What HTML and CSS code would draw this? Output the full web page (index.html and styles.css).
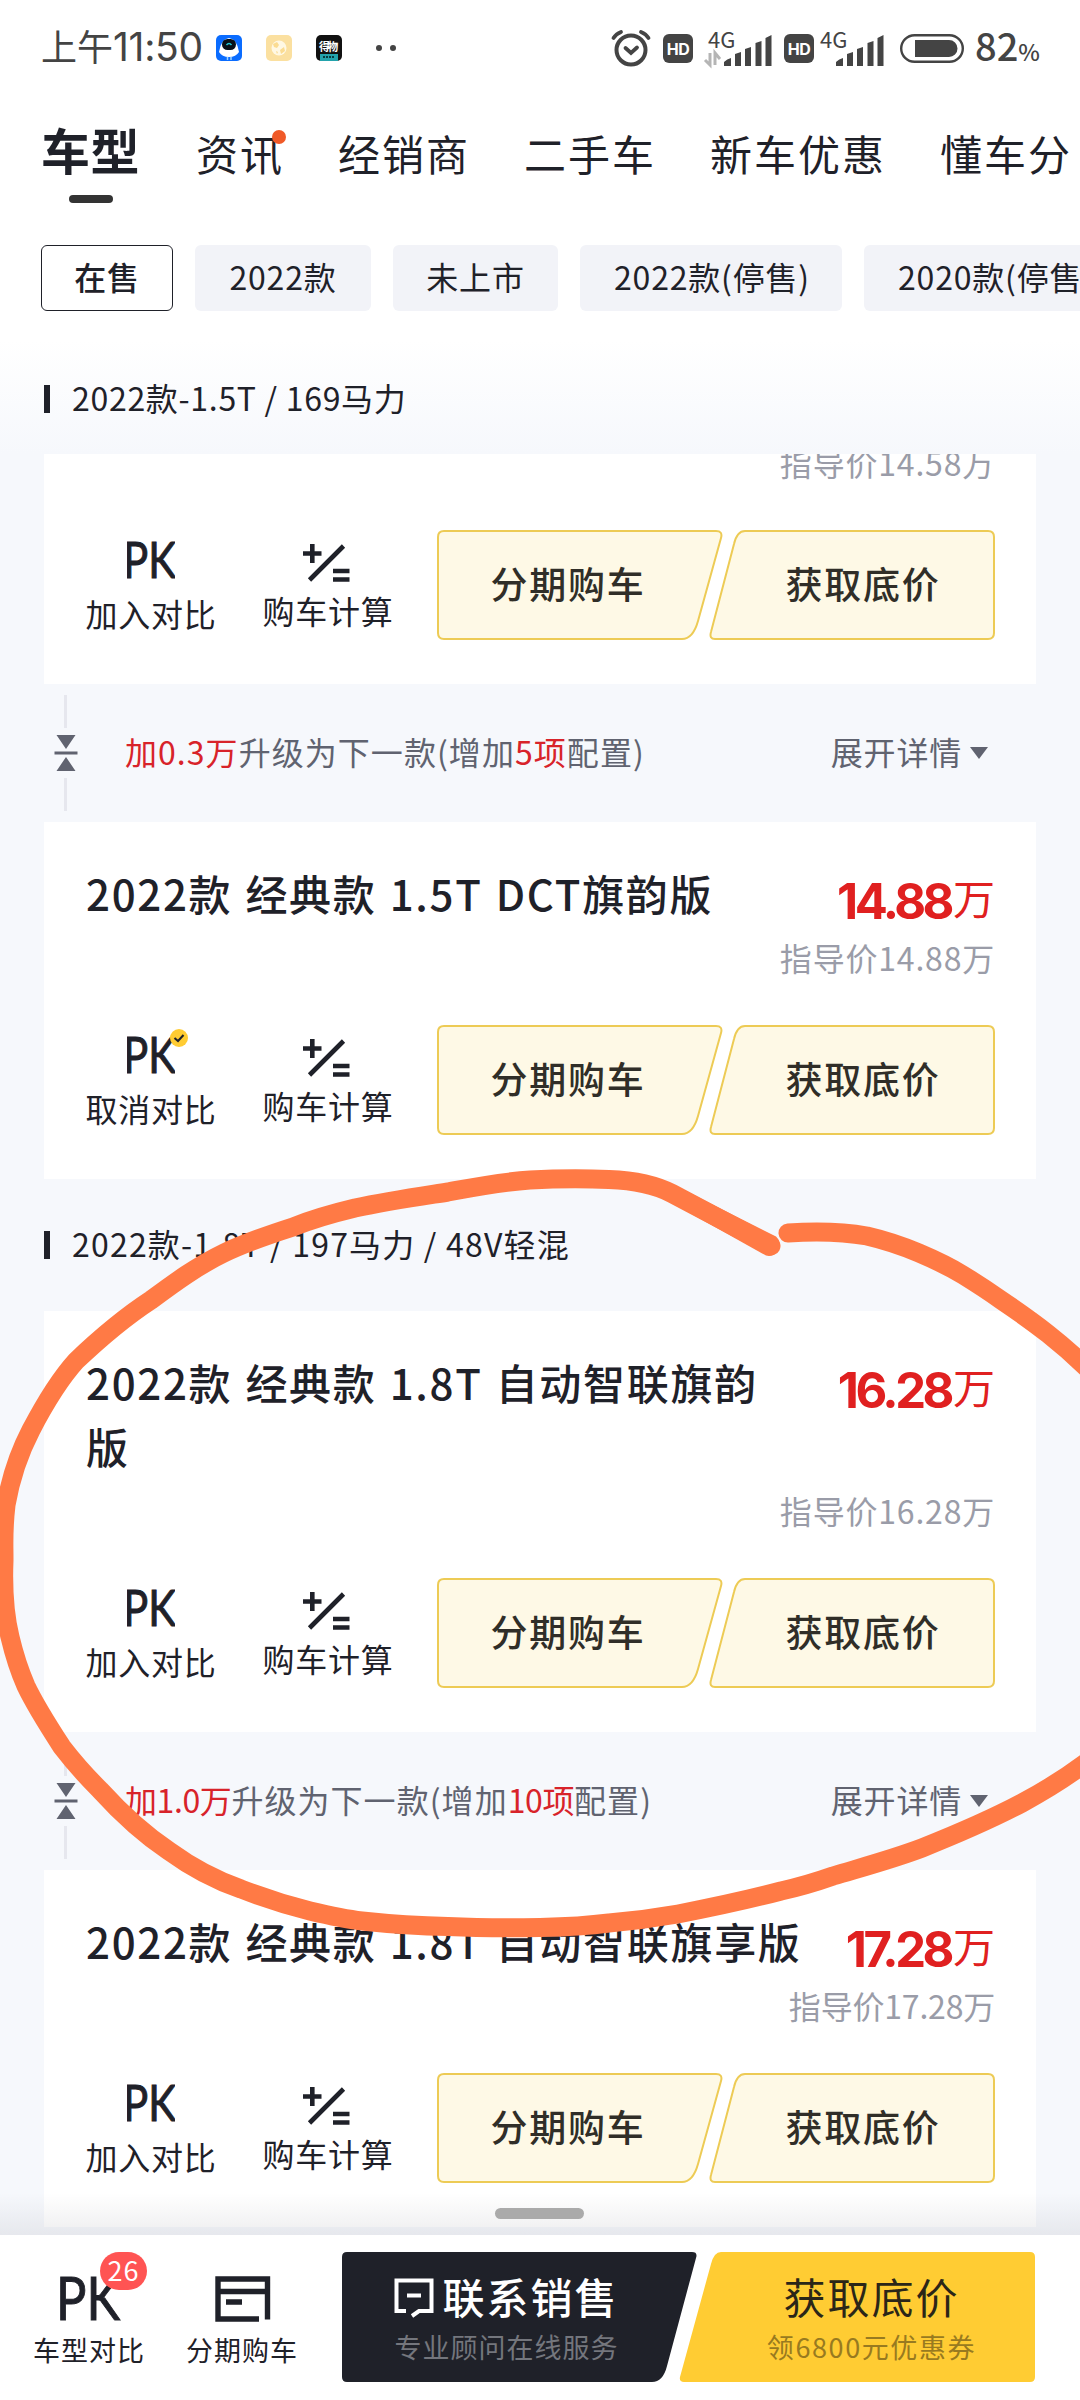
FILE: index.html
```html
<!DOCTYPE html>
<html lang="zh-CN">
<head>
<meta charset="utf-8">
<title>车型</title>
<link rel="stylesheet" href="styles.css">
</head>
<body>
<svg class="defs" aria-hidden="true">
  <symbol id="pk" viewBox="0 0 48 38"><text class="pk-text" x="-4" y="36.500" font-size="50" textLength="53" lengthAdjust="spacingAndGlyphs">PK</text></symbol>
  <symbol id="calc" viewBox="0 0 47 38"><path d="M0 9.5H18.5M9.3 0V19M6.5 36 40.5 2" fill="none" stroke="#1f2129" stroke-width="4.6"/><path d="M30 27H46.5M30 35.5H46.5" stroke="#1f2129" stroke-width="4.4"/></symbol>
  <symbol id="btn-l" viewBox="0 0 286 110"><path d="M7 1H279Q286 1 284 8L261 91Q256 109 245 109H7Q1 109 1 103V7Q1 1 7 1Z" fill="#fef9e6" stroke="#edcb55" stroke-width="2"/></symbol>
  <symbol id="btn-r" viewBox="0 0 286 110"><path d="M36 1H279Q285 1 285 7V103Q285 109 279 109H6Q0 109 2 102L25 14Q28 1 36 1Z" fill="#fef9e6" stroke="#edcb55" stroke-width="2"/></symbol>
  <symbol id="step" viewBox="0 0 24 116"><path d="M11.5 0V33M11.5 83V116" stroke="#e6e7ee" stroke-width="3"/><path d="M2.500 40H21.500L12 54ZM12 62 21.500 76H2.500ZM.5 56.500H23.500V59.500H.5Z" fill="#606370"/></symbol>
  <symbol id="signal" viewBox="0 0 48 31"><path d="M0 31V27Q3 24 7 23V31ZM11 31V19L17 17V31ZM21 31V14L27 12V31ZM31.500 31V8L37.500 6V31ZM41.500 31V3L47.500 0V31Z" fill="#444"/></symbol>
</svg>
<div class="page">
  <header class="status">
    <span class="time">上午<b>11:50</b></span>
    <svg class="app" viewBox="0 0 26 26"><rect width="26" height="26" rx="5" fill="#0a6cff"/><path d="M3 17Q5 4 13 3 21 4 23 17 20 22 13 22 6 22 3 17Z" fill="#fff"/><rect x="6" y="4" width="14" height="11" rx="5.500" fill="#071018"/><path d="M10.500 10Q13 7 15.500 10" fill="none" stroke="#21c8d8" stroke-width="1.500"/><path d="M11.500 22V25M15 22V25" stroke="#9fd4ff" stroke-width="1.500"/></svg>
    <svg class="app" viewBox="0 0 26 26"><rect width="26" height="26" rx="5" fill="#fbe0a0"/><circle cx="13" cy="13" r="7.500" fill="#fff8e4"/><path d="M7 9 11 7 13 10 11 13 8 12ZM14 15 18 12 19 16 15 19ZM10 16 12 17 11 19Z" fill="#fbdc92"/></svg>
    <svg class="app" viewBox="0 0 26 26"><rect width="26" height="26" rx="5" fill="#111"/><rect x="4" y="19" width="18" height="7" fill="#23a3ac"/><text x="3" y="16" font-size="11" font-weight="700" fill="#fff" textLength="20">得物</text><path d="M7 22H18" stroke="#063b40" stroke-width="2" stroke-dasharray="2 1"/></svg>
    <span class="dots"><i></i><i></i></span>
    <span class="spacer"></span>
    <svg class="alarm" viewBox="0 0 40 38"><circle cx="20" cy="21" r="14.500" fill="none" stroke="#444" stroke-width="4"/><path d="M14.500 19 20 24 26 18.500M2.500 9Q5 5 10 3M37.500 9Q35 5 30 3" fill="none" stroke="#444" stroke-width="3.800" stroke-linecap="round"/></svg>
    <span class="hd">HD</span>
    <span class="net net-a"><b>4G</b><svg class="arrows" viewBox="0 0 16 12"><path d="M5 0V12L0 7M10 12V0L15 6" fill="none" stroke="#b5b5b5" stroke-width="3"/></svg><svg class="bars"><use href="#signal"/></svg></span>
    <span class="hd hd-b">HD</span>
    <span class="net net-b"><b>4G</b><svg class="bars"><use href="#signal"/></svg></span>
    <svg class="battery" viewBox="0 0 64 29"><rect x="1.200" y="1.200" width="61.600" height="26.600" rx="13.300" fill="none" stroke="#444" stroke-width="2.400"/><path d="M15 6H49A8.500 8.500 0 0 1 49 23H15Z" fill="#444"/></svg>
    <span class="pct">82<small>%</small></span>
  </header>

  <nav class="tabs">
    <span class="tab active">车型</span><span class="tab dot">资讯</span><span class="tab">经销商</span><span class="tab">二手车</span><span class="tab">新车优惠</span><span class="tab">懂车分</span>
  </nav>

  <div class="chips">
    <span class="chip on">在售</span><span class="chip c2">2022款</span><span class="chip c3">未上市</span><span class="chip c4">2022款(停售)</span><span class="chip c4">2020款(停售)</span>
  </div>

  <main>
    <h2 class="group sticky">2022款-1.5T / 169马力</h2>
    <section class="card cut">
      <div class="guide">指导价14.58万</div>
      <div class="actions">
        <div class="tool pk"><svg><use href="#pk"/></svg><span>加入对比</span></div>
        <div class="tool calc"><svg><use href="#calc"/></svg><span>购车计算</span></div>
        <div class="btn left"><svg><use href="#btn-l"/></svg><span>分期购车</span></div>
        <div class="btn right"><svg><use href="#btn-r"/></svg><span>获取底价</span></div>
      </div>
    </section>
    <div class="upgrade">
      <svg class="step"><use href="#step"/></svg>
      <p><em>加0.3万</em>升级为下一款(增加<em>5项</em>配置)</p>
      <span class="more">展开详情</span>
    </div>
    <section class="card">
      <div class="head"><h3>2022款 经典款 1.5T DCT旗韵版</h3><div class="price"><b>14.88</b>万</div></div>
      <div class="guide">指导价14.88万</div>
      <div class="actions">
        <div class="tool pk picked"><svg><use href="#pk"/></svg><svg class="tick" viewBox="0 0 18 18"><circle cx="9" cy="9" r="9" fill="#fc3"/><path d="M4.500 9 8 12 13.500 6" fill="none" stroke="#1f2129" stroke-width="2"/></svg><span>取消对比</span></div>
        <div class="tool calc"><svg><use href="#calc"/></svg><span>购车计算</span></div>
        <div class="btn left"><svg><use href="#btn-l"/></svg><span>分期购车</span></div>
        <div class="btn right"><svg><use href="#btn-r"/></svg><span>获取底价</span></div>
      </div>
    </section>
    <h2 class="group">2022款-1.8T / 197马力 / 48V轻混</h2>
    <section class="card">
      <div class="head"><h3>2022款 经典款 1.8T 自动智联旗韵<br>版</h3><div class="price"><b>16.28</b>万</div></div>
      <div class="guide">指导价16.28万</div>
      <div class="actions">
        <div class="tool pk"><svg><use href="#pk"/></svg><span>加入对比</span></div>
        <div class="tool calc"><svg><use href="#calc"/></svg><span>购车计算</span></div>
        <div class="btn left"><svg><use href="#btn-l"/></svg><span>分期购车</span></div>
        <div class="btn right"><svg><use href="#btn-r"/></svg><span>获取底价</span></div>
      </div>
    </section>
    <div class="upgrade">
      <svg class="step"><use href="#step"/></svg>
      <p><em class="tight">加1.0万</em>升级为下一款(增加<em class="tight">10项</em>配置)</p>
      <span class="more">展开详情</span>
    </div>
    <section class="card">
      <div class="head"><h3>2022款 经典款 1.8T 自动智联旗享版</h3><div class="price"><b>17.28</b>万</div></div>
      <div class="guide tight">指导价17.28万</div>
      <div class="actions">
        <div class="tool pk"><svg><use href="#pk"/></svg><span>加入对比</span></div>
        <div class="tool calc"><svg><use href="#calc"/></svg><span>购车计算</span></div>
        <div class="btn left"><svg><use href="#btn-l"/></svg><span>分期购车</span></div>
        <div class="btn right"><svg><use href="#btn-r"/></svg><span>获取底价</span></div>
      </div>
    </section>
  </main>

  <footer class="bar">
    <div class="nav nav-pk"><svg viewBox="0 0 57 45"><text class="pk-text" x="-5" y="43.500" font-size="60" textLength="64" lengthAdjust="spacingAndGlyphs">PK</text></svg><span>车型对比</span><i class="badge">26</i></div>
    <div class="nav nav-pay"><svg viewBox="0 0 55 46"><path d="M44 43H3V3H52.500V43.500M3 15.500H52M11 26H27" fill="none" stroke="#1f2129" stroke-width="5.400"/></svg><span>分期购车</span></div>
    <div class="cta dark">
      <svg class="shape" viewBox="0 0 355 130"><path d="M5 0H350Q356 0 354 6L325 114Q321 130 310 130H5Q0 130 0 125V5Q0 0 5 0Z" fill="#1f2129"/></svg>
      <strong><svg class="chat" viewBox="0 0 40 40"><path d="M12 33H2.500V2.500H37.500V33H25L18 38M13 17.500H27" fill="none" stroke="#fff" stroke-width="4"/></svg>联系销售</strong>
      <small>专业顾问在线服务</small>
    </div>
    <div class="cta gold">
      <svg class="shape" viewBox="0 0 355 130"><path d="M41 0H350Q355 0 355 5V125Q355 130 350 130H4Q-1 130 0 125L31 12Q34 0 41 0Z" fill="#fc3"/></svg>
      <strong>获取底价</strong>
      <small>领6800元优惠券</small>
    </div>
  </footer>
  <i class="home"></i>

  <svg class="ink" viewBox="0 1160 1080 800">
    <path d="M771 1246 672 1193.500Q648 1181 609 1179.500T530 1180C500 1182 475 1187 448 1192C416 1197 388 1201 355 1208C330 1214 310 1220 293 1227C268 1235 245 1243 224 1253C197 1266 174 1283 151 1300C122 1319 98 1340 76 1361C58 1381 43 1407 31 1430C19 1453 11 1476 6 1505C3 1530 4 1540 4 1560C3 1585 4 1612 10 1637C14 1654 19 1670 26 1686C36 1707 49 1727 62 1747C75 1764 87 1777 100 1790C120 1812 142 1833 169 1851C191 1867 215 1880 241 1889C264 1898 286 1905 310 1911C327 1915 345 1919 362 1921C390 1924 419 1926 448 1926.500C480 1928 510 1928 540 1927.500C564 1927 586 1926 609 1923C632 1921 655 1918 678 1914C714 1907 747 1900 781 1891C799 1887 816 1882 833 1876C863 1867 893 1859 922 1848C957 1834 990 1820 1022 1803C1050 1788 1070 1775 1092 1758"/>
    <path d="M788 1233Q833 1230 867 1236 893 1242 919 1253T963 1275Q984 1288 1001 1300C1035 1323 1062 1343 1092 1373"/>
    <path class="tip" d="M776 1236.500A11 11 0 0 1 766 1255.500L672 1203V1184Z"/>
  </svg>
</div>
</body>
</html>
```
FILE: styles.css
```css
* { box-sizing: border-box; }
body {
  margin: 0;
  background: #f6f8fc;
  color: #1f2129;
  font: 32px/44px "Noto Sans CJK SC", sans-serif;
  letter-spacing: .8px;
}
h2, h3, p { margin: 0; font-weight: 400; }
i, em { font-style: normal; }
svg { display: block; overflow: visible; }
.defs { position: absolute; width: 0; height: 0; }
.page { position: relative; width: 1080px; height: 2400px; overflow: hidden; white-space: nowrap; }
.pk-text { font-family: Lato, sans-serif; letter-spacing: 0; fill: #1f2129; stroke: #1f2129; stroke-width: 1px; }

.status { display: flex; height: 96px; padding: 0 40px 0 41px; background: #fff; color: #444; align-items: center; }
.time { width: 175px; font-size: 36px; letter-spacing: 0; margin-top: -4px; }
.time b { font: 400 39px/44px Inter, sans-serif; letter-spacing: -.3px; }
.app { width: 26px; height: 26px; margin-right: 24px; }
.dots { display: flex; gap: 8px; margin-left: 10px; }
.dots i { width: 6px; height: 6px; border-radius: 50%; background: #444; }
.spacer { flex: 1; }
.alarm { width: 40px; height: 38px; margin-right: 12px; }
.hd { width: 30px; height: 29px; border-radius: 6px; background: #444; color: #fff; font: 700 16px/30px Inter, sans-serif; letter-spacing: -.5px; text-align: center; margin-right: 12px; }
.net { position: relative; width: 67px; height: 36px; margin-right: 12px; }
.net-b { width: 64px; margin-left: -6px; margin-right: 16px; }
.net b { position: absolute; left: 3px; top: -4px; font: 400 22px/24px "Noto Sans CJK SC", sans-serif; letter-spacing: 0; }
.net-b b { left: 0; }
.bars { position: absolute; right: 0; bottom: 0; width: 48px; height: 31px; }
.arrows { position: absolute; left: 0; bottom: 1px; width: 16px; height: 12px; }
.battery { width: 64px; height: 29px; margin-right: 11px; }
.pct { width: 65px; font-size: 38px; font-weight: 500; letter-spacing: 0; margin-top: -1px; }
.pct small { font-size: 23px; }

.tabs { display: flex; gap: 54px; height: 149px; padding: 25px 0 0 41px; background: #fff; font-size: 42px; letter-spacing: 2px; line-height: 64px; }
.tab { position: relative; flex: none; }
.tab.active { width: 101px; font-size: 49px; font-weight: 700; letter-spacing: .5px; line-height: 56px; }
.tab.active::after { content: ""; position: absolute; left: 28px; top: 74px; width: 44px; height: 8px; border-radius: 4px; background: #333; }
.tab.dot::after { content: ""; position: absolute; left: 76px; top: 9px; width: 14px; height: 14px; border-radius: 50%; background: #f05a28; }

.chips { display: flex; gap: 22px; height: 95px; padding-left: 41px; background: #fff; overflow: hidden; }
.chip { flex: none; height: 66px; border-radius: 6px; background: #f2f3f8; text-align: center; line-height: 62px; width: 132px; }
.chip.on { border: 1.5px solid #1f2129; background: #fff; font-weight: 500; line-height: 60px; }
.chip.c2 { width: 176px; }
.chip.c3 { width: 165px; }
.chip.c4 { width: 262px; padding-left: 2px; }

.group { position: relative; height: 132px; padding-left: 72px; font-size: 32px; line-height: 129px; letter-spacing: 1.200px; }
.group.sticky { height: 114px; line-height: 115px; letter-spacing: .7px; background: linear-gradient(#fff, #f6f8fc); }
.group::before { content: ""; position: absolute; left: 44px; top: 52px; width: 6px; height: 28px; background: #1f2129; }
.group.sticky::before { top: 45px; }

.card { margin: 0 44px; padding: 39px 41px 44px 42px; background: #fff; }
.card.cut { display: flex; flex-direction: column; justify-content: flex-end; height: 230px; padding-top: 0; overflow: hidden; }
.head { display: flex; justify-content: space-between; }
h3 { font-size: 42px; font-weight: 500; letter-spacing: 1.700px; word-spacing: 2px; line-height: 64px; }
.price { display: flex; height: 58px; margin-top: 4px; color: #e02020; font-size: 42px; letter-spacing: 0; line-height: 64px; }
.price b { margin-top: 5px; font: 700 49px/64px Inter, sans-serif; letter-spacing: -3.500px; padding-right: 2px; }
.guide { margin-top: 10px; text-align: right; color: #9a9ca8; }
.guide.tight { letter-spacing: -.2px; }
.actions { display: flex; height: 110px; margin-top: 46px; }
.tool { position: relative; display: flex; flex-direction: column; align-items: center; width: 130px; margin-right: 47px; }
.tool svg { width: 48px; height: 38px; margin: 11px 0 12px; }
.tool.calc { margin-right: 44px; }
.tool.calc svg { width: 47px; margin: 14px 3px 6px 0; }
.tool .tick { position: absolute; left: 84px; top: 4px; width: 18px; height: 18px; margin: 0; }
.btn { position: relative; width: 286px; height: 110px; font-size: 37px; font-weight: 500; letter-spacing: 1.800px; line-height: 106px; text-align: center; color: #302e28; }
.btn svg { position: absolute; inset: 0; width: 286px; height: 110px; }
.btn span { position: relative; }
.btn.left { padding-right: 24px; }
.btn.right { padding-left: 22px; margin-left: -14px; }

.upgrade { display: flex; align-items: center; height: 138px; padding: 0 92px 0 54px; color: #606370; }
.upgrade p { margin: -4px auto 0 47px; letter-spacing: 1.050px; }
.upgrade em { color: #d8232a; }
.upgrade .tight { letter-spacing: -.4px; }
.step { width: 24px; height: 116px; }
.more { display: flex; align-items: center; gap: 8px; margin-top: -4px; }
.more::after { content: ""; margin-top: 4px; border: 9px solid transparent; border-top: 12px solid #606370; border-bottom: 0; }

.bar { position: absolute; left: 0; right: 0; bottom: 0; display: flex; height: 165px; padding: 17px 45px 0 33px; background: #fff; }
.bar::before { content: ""; position: absolute; left: 0; right: 0; bottom: 100%; height: 42px; background: linear-gradient(rgba(20, 20, 40, 0), rgba(20, 20, 40, .07)); }
.nav { position: relative; display: flex; flex-direction: column; align-items: center; width: 112px; margin-right: 41px; font-size: 27px; letter-spacing: 1px; line-height: 40px; }
.nav svg { width: 57px; height: 45px; margin: 24px 0 9px; }
.nav-pay { margin-right: 44px; }
.nav-pay svg { width: 55px; height: 46px; margin-bottom: 8px; }
.badge { position: absolute; left: 67px; top: 0; width: 47px; height: 38px; border-radius: 19px; background: #ff5453; color: #fff; line-height: 36px; text-align: center; }
.cta { position: relative; display: flex; flex-direction: column; align-items: center; width: 355px; height: 130px; padding-top: 12px; }
.cta .shape { position: absolute; inset: 0; width: 355px; height: 130px; }
.cta strong { position: relative; display: flex; align-items: center; gap: 8px; font-size: 42px; font-weight: 500; letter-spacing: 2px; line-height: 64px; }
.cta small { position: relative; margin-top: -1px; font-size: 27px; letter-spacing: 1px; line-height: 40px; }
.dark { color: #fff; padding-right: 26px; }
.dark small { color: #74767d; }
.gold { margin-left: -17px; padding-left: 28px; color: #2b2618; }
.gold strong { font-weight: 400; }
.gold small { color: #987a20; letter-spacing: 1.600px; }
.chat { width: 40px; height: 40px; margin-top: 4px; }
.home { position: absolute; left: 495px; top: 2208px; width: 89px; height: 11px; border-radius: 6px; background: #aaa; }
.ink { position: absolute; left: 0; top: 1160px; width: 1080px; height: 800px; fill: none; stroke: #ff7a45; stroke-width: 19; stroke-linecap: round; stroke-linejoin: round; }
.ink .tip { fill: #ff7a45; stroke: none; }
```
